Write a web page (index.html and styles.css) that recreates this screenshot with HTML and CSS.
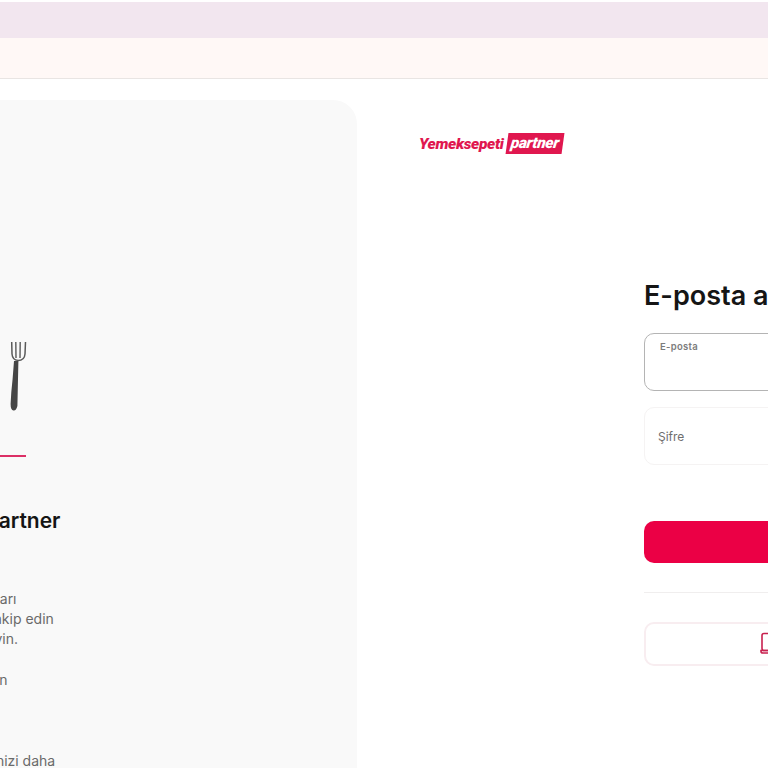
FILE: index.html
```html
<!DOCTYPE html>
<html lang="tr">
<head>
  <meta charset="UTF-8" />
  <meta name="viewport" content="width=device-width, initial-scale=1" />
  <title>Yemeksepeti Partner</title>
  <link rel="stylesheet" href="styles.css">
</head>
<body>

  <div class="banner-top"></div>
  <div class="banner-notice"></div>

  <div class="page">
    <!-- left promo card, runs off the left edge -->
    <aside class="promo">
      <div class="promo-art">
        <svg class="fork" width="18" height="70" viewBox="0 0 18 70">
          <path d="M1.7 1 L2 13 Q2.5 19 8 19.5 Q14.5 19.5 15 13 L15.5 1" fill="none" stroke="#5a5a5a" stroke-width="1.5"/>
          <path d="M5.8 1 L6 17 M10.2 1 L10 17" fill="none" stroke="#5a5a5a" stroke-width="1.4"/>
          <path d="M4 20 L8.4 20 L7.4 65 Q6 70 3.5 69.5 Q0.6 69 0.6 63 Q1 52 2.6 38 Z" fill="#454545"/>
        </svg>
      </div>
      <div class="promo-rule"></div>
      <h2 class="promo-title">Yemeksepeti Partner</h2>
      <div class="promo-text">
        <p class="line">Siparişlerinizi ve ödeme hakları</p>
        <p class="line">İşletmenizin performansını takip edin</p>
        <p class="line">Menünüzü rahatça güncelleyin.</p>
        <p class="line line-gap">Tüm kampanyalarınızı yönetin</p>
        <p class="line line-gap-lg">Tüm müşterilerinizle işletmenizi daha</p>
      </div>
    </aside>

    <main class="login">
      <div class="logo">
        <span class="logo-name">Yemeksepeti</span>
        <span class="logo-tag">partner</span>
      </div>

      <div class="login-form">
        <h1>E-posta adresinizle giriş yapın</h1>
        <div class="field field-active">
          <label>E-posta</label>
        </div>
        <div class="field field-empty">
          <label>Şifre</label>
        </div>
        <button class="submit">Giriş yap</button>
        <div class="divider"></div>
        <button class="alt-login">
          <svg width="24" height="24" viewBox="0 0 24 24" fill="none" stroke="#c8214f" stroke-width="1.6">
            <rect x="2" y="1.5" width="17" height="17" rx="2"/>
            <path d="M1 18.5 H22 V19.5 Q22 21 20 21 H3 Q1 21 1 19.5 Z"/>
          </svg>
          <span>Cihaz ile giriş yapın</span>
        </button>
      </div>
    </main>
  </div>

</body>
</html>
```

FILE: styles.css
```css
html, body {
  margin: 0;
  padding: 0;
  overflow: hidden;
  height: 768px;
  background: #fff;
  font-family: Inter, Arial, sans-serif;
}
.banner-top {
  height: 36px;
  margin-top: 2px;
  background: #f2e6ef;
}
.banner-notice {
  height: 40px;
  background: #fff8f6;
  border-bottom: 1px solid #e9e5e3;
}
.page {
  display: flex;
  padding-top: 21px;
}
.promo {
  flex: none;
  width: 560px;
  height: 760px;
  margin-left: -203px;
  box-sizing: border-box;
  padding-top: 241px;
  background: #f9f9f9;
  border-radius: 24px;
}
.promo-art {
  height: 71px;
  padding-left: 213px;
}
.fork {
  display: block;
}
.promo-rule {
  width: 229px;
  height: 2px;
  margin-top: 43px;
  background: #dc2f66;
}
.promo-title {
  margin: 51px 0 0 52px;
  font-size: 21px;
  font-weight: 600;
  color: #151515;
  white-space: nowrap;
}
.promo-text {
  margin: 56px 0 0 14px;
  color: #6a6a6a;
  font-size: 14px;
  line-height: 20px;
}
.line {
  margin: 0;
  white-space: nowrap;
}
.line-gap {
  margin-top: 21px;
}
.line-gap-lg {
  margin-top: 61px;
}
.login {
  flex: none;
  width: 600px;
  padding-left: 62px;
  box-sizing: border-box;
}
.logo {
  display: flex;
  align-items: center;
  gap: 3px;
  margin-top: 33px;
  height: 21px;
  font-family: Roboto, Arial, sans-serif;
  font-style: italic;
  font-weight: 900;
  font-size: 15.5px;
  letter-spacing: -0.35px;
}
.logo-name {
  color: #e0174f;
}
.logo-tag {
  padding: 1px 4px 2px 4px;
  background: #e0174f;
  color: #fff;
  transform: skewX(-8deg);
}
.login-form {
  width: 400px;
  margin: 125px 0 0 225px;
}
.login-form h1 {
  margin: 1px 0 20px 0;
  font-size: 27px;
  line-height: 34px;
  font-weight: 600;
  color: #151515;
  white-space: nowrap;
}
.field {
  height: 58px;
  box-sizing: border-box;
  border-radius: 10px;
  margin-bottom: 16px;
  color: #6e6e6e;
}
.field-active {
  border: 1px solid #b4b4b4;
  padding: 7px 15px;
  font-size: 9.5px;
  font-weight: 600;
  letter-spacing: 0.3px;
  color: #7c7c7c;
}
.field-empty {
  border: 1px solid #f5f3f3;
  padding: 21px 13px;
  font-size: 12px;
}
.submit {
  display: block;
  width: 100%;
  height: 42px;
  margin-top: 56px;
  border: none;
  border-radius: 10px;
  background: #eb0045;
  color: #fff;
  font-family: inherit;
  font-size: 15px;
  font-weight: 600;
}
.divider {
  height: 1px;
  margin: 29px 0;
  background: #f0eeee;
}
.alt-login {
  display: flex;
  justify-content: center;
  align-items: center;
  gap: 12px;
  width: 100%;
  height: 44px;
  padding: 0;
  background: #fff;
  border: 2px solid #f8edf0;
  border-radius: 10px;
  color: #c8214f;
  font-family: inherit;
  font-size: 14px;
  font-weight: 600;
}
```
